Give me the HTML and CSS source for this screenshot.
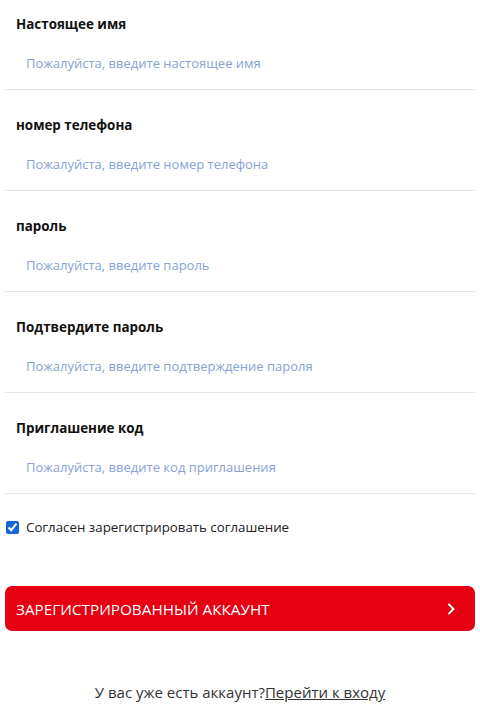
FILE: index.html
```html
<!DOCTYPE html>
<html>
<head>
  <meta charset="utf-8">
  <link rel="stylesheet" href="styles.css">
</head>
<body>
  <div class="form">
    <div class="field">
      <label class="field-label">Настоящее имя</label>
      <input class="field-input" type="text" placeholder="Пожалуйста, введите настоящее имя">
    </div>
    <div class="field">
      <label class="field-label">номер телефона</label>
      <input class="field-input" type="text" placeholder="Пожалуйста, введите номер телефона">
    </div>
    <div class="field">
      <label class="field-label">пароль</label>
      <input class="field-input" type="password" placeholder="Пожалуйста, введите пароль">
    </div>
    <div class="field">
      <label class="field-label">Подтвердите пароль</label>
      <input class="field-input" type="password" placeholder="Пожалуйста, введите подтверждение пароля">
    </div>
    <div class="field">
      <label class="field-label">Приглашение код</label>
      <input class="field-input" type="text" placeholder="Пожалуйста, введите код приглашения">
    </div>

    <label class="agree">
      <input type="checkbox" checked>
      <span>Согласен зарегистрировать соглашение</span>
    </label>

    <button class="submit">
      <span>ЗАРЕГИСТРИРОВАННЫЙ АККАУНТ</span>
      <svg width="12" height="12" viewBox="0 0 12 12">
        <path d="M4 1.5 L8.5 6 L4 10.5" fill="none" stroke="#fff" stroke-width="2" stroke-linecap="round" stroke-linejoin="round"/>
      </svg>
    </button>

    <p class="login">У вас уже есть аккаунт?<a href="#">Перейти к входу</a></p>
  </div>
</body>
</html>
```

FILE: styles.css
```css
body {
  margin: 0;
  background: #fff;
  font-family: "Open Sans", "Noto Sans", sans-serif;
  color: #000;
}

.form {
  margin-top: -11px;
  padding: 0 5px;
}

.field {
  padding: 25px 0 6px 11px;
  border-bottom: 1px solid #e4e4ee;
}

.field-label {
  display: block;
  font-size: 13.4px;
  font-weight: 700;
  line-height: 20px;
  color: #111;
}

.field-input {
  display: block;
  width: 100%;
  box-sizing: border-box;
  height: 40px;
  margin-top: 9px;
  padding: 0 10px;
  border: none;
  outline: none;
  font-family: inherit;
  font-size: 13px;
  background: transparent;
}

.field-input::placeholder {
  color: #87a2d3;
}

.agree {
  display: flex;
  align-items: center;
  margin-top: 24px;
  font-size: 13.3px;
  color: #222;
}

.agree input {
  width: 13px;
  height: 13px;
  margin: 0 7px 0 1px;
  accent-color: #1565d8;
}

.submit {
  display: flex;
  align-items: center;
  justify-content: space-between;
  width: 100%;
  height: 45px;
  margin-top: 50px;
  padding: 0 18px 0 11px;
  border: none;
  border-radius: 7px;
  background: #e60012;
  color: #fff;
  font-family: inherit;
  font-size: 15.3px;
  cursor: pointer;
}

.login {
  margin: 51px 0 0;
  text-align: center;
  font-size: 15px;
  color: #333;
}

.login a {
  color: #333;
}
```
